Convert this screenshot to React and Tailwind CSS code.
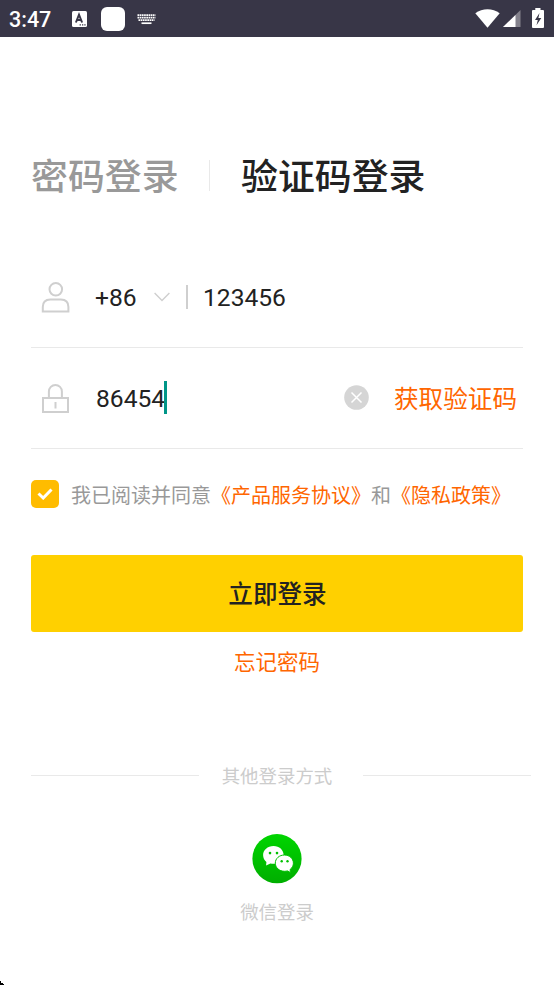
import { useState } from 'react';

const rowClass = 'flex h-[101px] items-center border-b border-[#e9e9e9]';

function StatusBar() {
  return (
    <header className="flex h-[37px] items-center bg-[#383647] text-white">
      <span className="ml-[9px] w-[63px] pt-[2px] font-['Roboto',sans-serif] text-[21.5px] leading-[35px] font-medium">3:47</span>
      <svg className="h-4 w-[15px]" viewBox="0 0 15 16">
        <rect width="15" height="16" rx="1.5" fill="#fff" />
        <path d="M3.9 11.5 7 3.7 10.1 11.5M5 9h4" fill="none" stroke="#383647" strokeWidth="2" />
        <path d="M7.6 13.2h1.3v1.3H7.6zM10 13.2h1.3v1.3H10zM12.3 13.2h1.3v1.3h-1.3z" fill="#383647" />
      </svg>
      <span className="ml-[14px] size-6 rounded-[6px] bg-white" />
      <svg className="mt-px ml-3 h-[11px] w-[19px]" viewBox="0 0 19 11">
        <path d="M.5 1.2h18M.5 3.7h18M1.5 6.2h16" stroke="#fff" strokeWidth="1.8" strokeDasharray="1.7 .5" />
        <path d="M4.5 9.2h10" stroke="#fff" strokeWidth="1.7" />
      </svg>
      <svg className="ml-auto h-[19px] w-[25px]" viewBox="0 0 25 19">
        <path d="M.3 4.3C7.5-1.1 17.5-1.1 24.7 4.3L12.5 18.7Z" fill="#fff" />
      </svg>
      <svg className="ml-[3px] h-[17px] w-[18px]" viewBox="0 0 18 17">
        <path d="M17.5 0V17H0Z" fill="#83818c" />
        <path d="M12.5 4.9V17H0Z" fill="#fff" />
      </svg>
      <svg className="mr-[10px] mb-px ml-[11px] h-5 w-3" viewBox="0 0 12 20">
        <path d="M3.3 0h5.2v2H11q1 0 1 1v16q0 1-1 1H1q-1 0-1-1V3q0-1 1-1h2.3Z" fill="#fff" />
        <path d="M7.5 5 3 12h2.8L4.5 17.3 9.3 10H6.4Z" fill="#383647" />
      </svg>
    </header>
  );
}

function UserIcon() {
  return (
    <svg className="ml-[10px] h-8 w-[29px]" viewBox="0 0 29 32" fill="none" stroke="#cfcfcf" strokeWidth="2">
      <circle cx="14.8" cy="8.3" r="6.3" />
      <path d="M1.8 30.4V26q0-7.5 7.5-7.5h10.6q7.5 0 7.5 7.5v4.4Z" />
    </svg>
  );
}

function LockIcon() {
  return (
    <svg className="mt-[2px] ml-[10px] h-8 w-[29px]" viewBox="0 0 29 32" fill="none" stroke="#cfcfcf" strokeWidth="2">
      <path d="M7.9 15V8.5a6.5 6.5 0 0 1 13 0V15" />
      <path d="M2 15h25v14H2Z" />
      <path d="M14.5 19v6.5" />
    </svg>
  );
}

function WechatIcon() {
  return (
    <svg className="size-[50px]" viewBox="0 0 50 50">
      <defs>
        <linearGradient id="wechat" x1="0" y1="0" x2="0" y2="1">
          <stop stopColor="#00d500" />
          <stop offset="1" stopColor="#00ae00" />
        </linearGradient>
      </defs>
      <circle cx="25" cy="24.7" r="24.6" fill="url(#wechat)" />
      <path d="M21.5 12c-5.9 0-10.4 4-10.4 9.1 0 3 1.2 5.3 3.3 7l-.3 3.5 4.3-2.2c1.1.3 2.1.4 3.2.4 5.7 0 10-4 10-8.900 0-5-4.300-8.900-10-8.900Z" fill="#fff" />
      <path d="M32.5 21c-5.2 0-9.2 3.5-9.2 8.1s4 8.2 9.2 8.2c1 0 2-.1 3-.4l3 1.7-.4-3.1c2-1.500 3.300-3.700 3.300-6.300 0-4.700-4.100-8.200-8.900-8.200Z" fill="#fff" stroke="#00c000" strokeWidth="1" />
      <g fill="#00c000">
        <circle cx="18" cy="19.1" r="1.3" />
        <circle cx="25" cy="19.1" r="1.3" />
        <circle cx="29.7" cy="27.3" r="1.2" />
        <circle cx="35.5" cy="27.3" r="1.2" />
      </g>
    </svg>
  );
}

export default function App() {
  const [agreed, setAgreed] = useState(true);

  return (
    <div className="relative h-[985px] w-[554px] overflow-hidden bg-white font-['Noto_Sans_CJK_SC',sans-serif] text-[#222]">
      <StatusBar />

      <main className="pl-[31px]">
        <nav className="flex h-[210px] items-center pt-[67px] text-[36.9px] leading-[54px] font-medium whitespace-nowrap">
          <button type="button" className="w-[178px] pb-[4px] text-left text-[#999]">密码登录</button>
          <span className="h-[31px] w-px bg-[#e9e9e9]" />
          <button type="button" className="ml-[31px] pb-[4px]">验证码登录</button>
        </nav>

        <section className="w-[492px] font-['Roboto','Noto_Sans_CJK_SC',sans-serif] text-[24.6px]">
          <div className={rowClass}>
            <UserIcon />
            <span className="ml-[25px] w-[59px] pt-[2px]">+86</span>
            <svg className="h-[10px] w-4" viewBox="0 0 16 10" fill="none" stroke="#cfcfcf" strokeWidth="1.4">
              <path d="m.6 1 7.4 7.4L15.4 1" />
            </svg>
            <span className="ml-[16px] h-6 w-[2px] bg-[#cfcfcf]" />
            <span className="ml-[15px] pt-[2px]">123456</span>
          </div>
          <div className={rowClass}>
            <LockIcon />
            <span className="ml-[26px] pt-[2px]">86454</span>
            <span className="-ml-px mb-[2px] h-[33px] w-[3px] bg-[#009688]" />
            <svg className="mb-px ml-auto size-[25px]" viewBox="0 0 25 25">
              <circle cx="12.5" cy="12.5" r="12.3" fill="#d5d5d5" />
              <path d="m7.5 7.5 10 10m0-10-10 10" stroke="#fff" strokeWidth="1.5" />
            </svg>
            <button type="button" className="mr-[6px] ml-[25px] pt-[5px] text-[#ff6600]">获取验证码</button>
          </div>
        </section>

        <div className="flex h-[91px] items-center text-[20px] whitespace-nowrap text-[#999]">
          <button
            type="button"
            onClick={() => setAgreed((v) => !v)}
            className="mr-3 mb-[2px] flex size-7 items-center justify-center rounded-[5px] bg-[#ffbc00]"
          >
            {agreed && (
              <svg className="h-3 w-4" viewBox="0 0 16 12" fill="none" stroke="#fff" strokeWidth="3">
                <path d="m1.5 5.5 4.7 4.5L14.5 1.5" />
              </svg>
            )}
          </button>
          <p>
            我已阅读并同意<span className="text-[#ff6600]">《产品服务协议》</span>和<span className="text-[#ff6600]">《隐私政策》</span>
          </p>
        </div>

        <button type="button" className="mt-[15px] block h-[77px] w-[492px] rounded-[3px] bg-[#ffd000] pb-[2px] pl-px text-[24.6px] font-medium">
          立即登录
        </button>
        <button type="button" className="block h-[60px] w-[492px] pb-[2px] text-[21.5px] text-[#ff6600]">忘记密码</button>

        <div className="mt-[68px] flex h-[30px] w-[500px] items-center text-[18.45px] text-[#ccc]">
          <span className="h-px w-[168px] bg-[#e9e9e9]" />
          <span className="flex-1 pt-px pr-2 text-center">其他登录方式</span>
          <span className="h-px w-[168px] bg-[#e9e9e9]" />
        </div>

        <button type="button" className="mt-[44px] flex w-[492px] flex-col items-center text-[18.45px] leading-[28px] text-[#ccc]">
          <WechatIcon />
          <span className="mt-[13px]">微信登录</span>
        </button>
      </main>

      {/* pointer tip in the corner */}
      <svg className="absolute bottom-0 left-0 h-1 w-1" viewBox="0 0 4 4">
        <path d="M0 0h1v2h2v1h1v1H0Z" fill="#000" />
      </svg>
    </div>
  );
}
